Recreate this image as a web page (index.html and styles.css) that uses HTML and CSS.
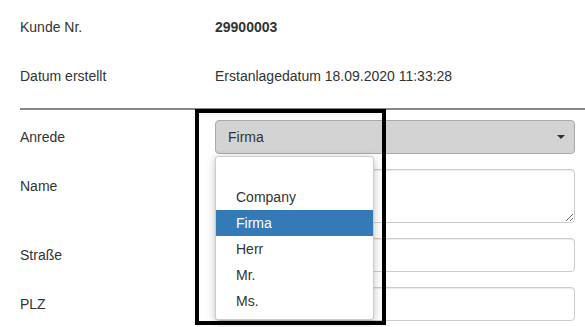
FILE: index.html
```html
<!DOCTYPE html>
<html lang="de">
<head>
  <meta charset="UTF-8">
  <meta name="viewport" content="width=device-width, initial-scale=1.0">
  <title>Kunde bearbeiten</title>
  <link rel="stylesheet" href="styles.css">
</head>
<body>
  <div class="container">
    <div class="row">
      <label class="row-label">Kunde Nr.</label>
      <div class="row-value"><strong>29900003</strong></div>
    </div>
    <div class="row">
      <label class="row-label">Datum erstellt</label>
      <div class="row-value">Erstanlagedatum 18.09.2020 11:33:28</div>
    </div>

    <hr>

    <div class="row">
      <label class="row-label">Anrede</label>
      <div class="row-control select-wrap">
        <div class="fake-select">
          <span>Firma</span>
          <span class="caret"></span>
        </div>
        <!-- open dropdown -->
        <ul class="options">
          <li>&nbsp;</li>
          <li>Company</li>
          <li class="active">Firma</li>
          <li>Herr</li>
          <li>Mr.</li>
          <li>Ms.</li>
        </ul>
      </div>
    </div>
    <div class="row">
      <label class="row-label">Name</label>
      <div class="row-control"><textarea></textarea></div>
    </div>
    <div class="row">
      <label class="row-label">Straße</label>
      <div class="row-control"><input type="text"></div>
    </div>
    <div class="row">
      <label class="row-label">PLZ</label>
      <div class="row-control"><input type="text"></div>
    </div>
  </div>

  <div class="highlight-box"></div>
</body>
</html>
```

FILE: styles.css
```css
/* styles.css */
body {
    font-family: "Liberation Sans", Arial, sans-serif;
    font-size: 14px;
    line-height: 20px;
    color: #333;
    margin: 0;
    padding: 0;
    background-color: #fff;
    overflow: hidden;
}

.container {
    padding: 10px 0 0 20px;
}

.row {
    display: flex;
    margin-bottom: 15px;
    padding-right: 10px;
}

.row-label {
    width: 195px;
    flex-shrink: 0;
    padding-top: 7px;
}

.row-value {
    padding-top: 7px;
    height: 27px;
}

.row-value strong {
    font-weight: bold;
}

.row-control {
    flex: 1;
}

hr {
    margin: 0 0 10px;
    border: 0;
    border-top: 2px solid #888;
}

.select-wrap {
    position: relative;
}

.fake-select {
    height: 34px;
    box-sizing: border-box;
    padding: 6px 12px;
    background-color: #d3d3d3;
    border: 1px solid #a9a9a9;
    border-radius: 4px;
    display: flex;
    justify-content: space-between;
    align-items: center;
}

.caret {
    width: 0;
    height: 0;
    border-left: 4px solid transparent;
    border-right: 4px solid transparent;
    border-top: 4px solid #333;
    margin-right: -3px;
}

.options {
    position: absolute;
    top: 36px;
    left: 0;
    width: 159px;
    box-sizing: border-box;
    margin: 0;
    padding: 1px 0 5px;
    list-style: none;
    background-color: #fff;
    border: 1px solid #ccc;
    border-radius: 3px;
    box-shadow: 0 2px 8px rgba(0, 0, 0, 0.25);
    z-index: 2;
}

.options li {
    height: 26px;
    line-height: 26px;
    padding-left: 20px;
}

.options li.active {
    background-color: #337ab7;
    color: #fff;
}

input, textarea {
    display: block;
    width: 100%;
    box-sizing: border-box;
    height: 34px;
    padding: 6px 12px;
    font-family: inherit;
    font-size: 14px;
    border: 1px solid #ccc;
    border-radius: 4px;
    box-shadow: inset 0 1px 1px rgba(0, 0, 0, 0.075);
}

textarea {
    height: 54px;
    resize: vertical;
}

.highlight-box {
    position: absolute;
    left: 195px;
    top: 109px;
    width: 191px;
    height: 216px;
    box-sizing: border-box;
    border: 4px solid #000;
    z-index: 3;
}
```
